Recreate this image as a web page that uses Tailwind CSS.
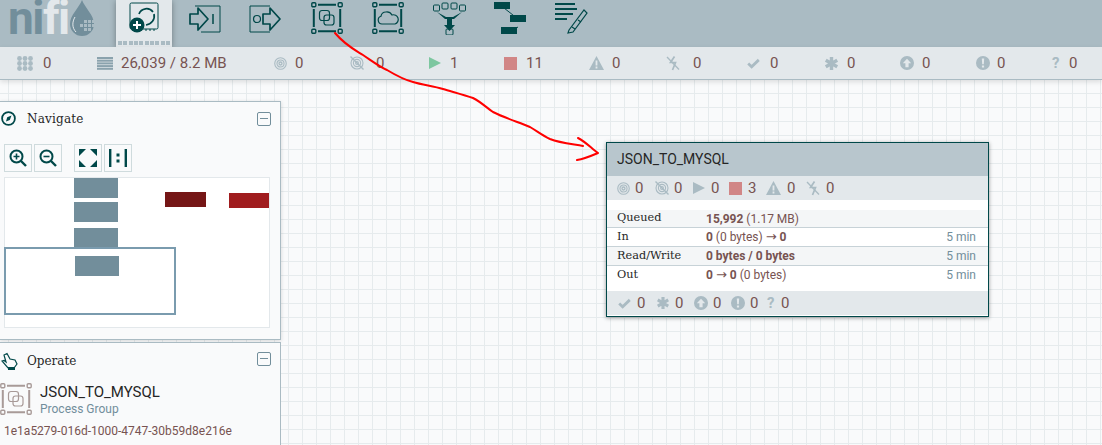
<!DOCTYPE html>
<html lang="en">
<head>
    <meta charset="UTF-8">
    <title>NiFi Flow</title>
    <script src="https://cdn.jsdelivr.net/npm/@tailwindcss/browser@4"></script>
</head>
<body class="overflow-hidden">
    <!-- shared status icons -->
    <svg class="hidden">
        <symbol id="i-target" viewBox="0 0 14 14"><g fill="none" stroke="currentColor"><circle cx="7" cy="7" r="6.2" stroke-width="1.2"/><circle cx="7" cy="7" r="3.8" stroke-width="1.2"/><circle cx="7" cy="7" r="1.6" stroke-width="1.4"/></g></symbol>
        <symbol id="i-notarget" viewBox="0 0 14 14"><g fill="none" stroke="currentColor"><circle cx="7" cy="7" r="6" stroke-width="1.1"/><circle cx="7" cy="7" r="3.6" stroke-width="1.1"/><circle cx="7" cy="7" r="1.4" stroke-width="1.1"/><path d="M0.5 0.5L13.5 13.5" stroke-width="1.4"/></g></symbol>
        <symbol id="i-play" viewBox="0 0 12 12"><path d="M0 0L12 6L0 12Z" fill="currentColor"/></symbol>
        <symbol id="i-warn" viewBox="0 0 15 14"><path fill-rule="evenodd" d="M7.5 0L15 14H0ZM6.6 4.5V9.5H8.4V4.5ZM6.6 10.6V12.4H8.4V10.6Z" fill="currentColor"/></symbol>
        <symbol id="i-bolt" viewBox="0 0 14 15"><g fill="none" stroke="currentColor"><path d="M8.5 0.5L4.5 6.5H9.5L6.5 14" stroke-width="1.7"/><path d="M1 1L13 13.5" stroke-width="1.3"/></g></symbol>
        <symbol id="i-check" viewBox="0 0 14 11"><path d="M1.3 5.5L5 9L12.7 1.6" fill="none" stroke="currentColor" stroke-width="3"/></symbol>
        <symbol id="i-star" viewBox="0 0 13 13"><path d="M6.5 0V13M0.8 3.2L12.2 9.8M12.2 3.2L0.8 9.8" fill="none" stroke="currentColor" stroke-width="3.4"/></symbol>
        <symbol id="i-up" viewBox="0 0 14 14"><path fill-rule="evenodd" d="M7 0a7 7 0 1 0 0 14A7 7 0 0 0 7 0ZM7 2.8L11.2 7.2H8.6V11.2H5.4V7.2H2.8Z" fill="currentColor"/></symbol>
        <symbol id="i-excl" viewBox="0 0 14 14"><path fill-rule="evenodd" d="M7 0a7 7 0 1 0 0 14A7 7 0 0 0 7 0ZM5.8 2.6H8.2L7.8 8.2H6.2ZM5.9 9.4H8.1V11.4H5.9Z" fill="currentColor"/></symbol>
        <symbol id="i-group" viewBox="0 0 32 32"><g fill="none" stroke="currentColor"><rect x="0.8" y="0.8" width="4" height="4" rx="1" stroke-width="1.4"/><rect x="27.2" y="0.8" width="4" height="4" rx="1" stroke-width="1.4"/><rect x="0.8" y="27.2" width="4" height="4" rx="1" stroke-width="1.4"/><rect x="27.2" y="27.2" width="4" height="4" rx="1" stroke-width="1.4"/><path d="M7 2.8H25M7 29.2H25M2.8 7V25M29.2 7V25" stroke-width="2"/><rect x="8.5" y="8.5" width="10" height="10" rx="2.5" stroke-width="1.2"/><rect x="13" y="13" width="10" height="10" rx="2.5" stroke-width="1.2"/></g></symbol>
    </svg>

    <div class="relative w-[1102px] h-[445px] overflow-hidden font-['Roboto',sans-serif] text-[#775351] bg-[#f9fafb]">
        <!-- Canvas grid -->
        <div class="absolute inset-0 bg-[linear-gradient(to_right,#e6ebed_1px,transparent_1px),linear-gradient(to_bottom,#e6ebed_1px,transparent_1px)] bg-[size:14px_14px] bg-[position:8px_9px]"></div>

        <!-- Toolbar -->
        <header class="relative flex items-start h-[47px] bg-[#aabbc3] text-[#004849]">
            <div class="flex w-[116px] h-[47px] pl-[8px]">
                <div class="leading-[37px] text-[46px] font-bold tracking-[-1.5px] whitespace-nowrap"><span class="text-[#728e9b]">ni</span><span class="text-[#e3e8eb]">fi</span></div>
                <svg class="shrink-0" width="27" height="36" viewBox="0 0 27 36"><path d="M13 0C10 8 1 15 1 24a12 12 0 0 0 24 0C25 15 16 8 13 0Z" fill="#728e9b"/><path d="M6 17C3 22 3 28 7 32" fill="none" stroke="#e3e8eb" stroke-width="1"/><g fill="#aabbc3"><rect x="15" y="20" width="3" height="3"/><rect x="19" y="20" width="3" height="3"/><rect x="23" y="20" width="3" height="3"/><rect x="11" y="24" width="3" height="3"/><rect x="15" y="24" width="3" height="3"/><rect x="19" y="24" width="3" height="3"/><rect x="23" y="24" width="3" height="3"/><rect x="15" y="28" width="3" height="3"/><rect x="19" y="28" width="3" height="3"/></g></svg>
            </div>
            <!-- Selected processor button -->
            <div class="flex flex-col items-center w-[56px] h-[47px] bg-[#e3e8eb] shadow-[0_1px_6px_rgba(0,0,0,0.35)]">
                <svg class="mt-[2px]" width="32" height="31" viewBox="0 0 32 31"><g fill="none" stroke="currentColor"><rect x="2" y="1" width="28" height="26" rx="1.5" stroke-width="1"/><path d="M11 12A8 8 0 0 1 25 10" stroke-width="1.7"/><path d="M26 12A9 9 0 0 1 18 23" stroke-width="1.7"/><path d="M18 27V29M22 27V29M26 27V29" stroke-width="1"/></g><circle cx="9" cy="23" r="7.5" fill="currentColor"/><path d="M9 19V27M5 23H13" stroke="#fff" stroke-width="2"/></svg>
                <div class="flex gap-[1.4px] mt-[8px]">
                    <span class="w-[4px] h-[4px] bg-[#aabbc3]"></span><span class="w-[4px] h-[4px] bg-[#aabbc3]"></span><span class="w-[4px] h-[4px] bg-[#aabbc3]"></span><span class="w-[4px] h-[4px] bg-[#aabbc3]"></span><span class="w-[4px] h-[4px] bg-[#aabbc3]"></span><span class="w-[4px] h-[4px] bg-[#aabbc3]"></span><span class="w-[4px] h-[4px] bg-[#aabbc3]"></span><span class="w-[4px] h-[4px] bg-[#aabbc3]"></span><span class="w-[4px] h-[4px] bg-[#aabbc3]"></span><span class="w-[4px] h-[4px] bg-[#aabbc3]"></span>
                </div>
            </div>
            <!-- Input port -->
            <svg class="ml-[17px] mt-[5px]" width="33" height="28" viewBox="0 0 33 28"><g fill="none" stroke="currentColor"><path d="M6 1H31V27H12" stroke-width="1"/><path d="M1 9H9V3L19 14L9 25V19H1Z" stroke-width="1.7" stroke-linejoin="round"/><path d="M24 9V19" stroke-width="1.5"/></g></svg>
            <!-- Output port -->
            <svg class="ml-[27px] mt-[5px]" width="33" height="28" viewBox="0 0 33 28"><g fill="none" stroke="currentColor"><path d="M21 1H1V27H21" stroke-width="1"/><circle cx="8" cy="14" r="3.5" stroke-width="1.2"/><path d="M14 9H21V3L31 14L21 25V19H14Z" stroke-width="1.7" stroke-linejoin="round"/></g></svg>
            <!-- Process group -->
            <svg class="ml-[29px] mt-[2px]" width="32" height="32" viewBox="0 0 32 32"><use href="#i-group"/></svg>
            <!-- Remote process group -->
            <svg class="ml-[29px] mt-[2px]" width="32" height="32" viewBox="0 0 32 32"><g fill="none" stroke="currentColor"><rect x="0.8" y="0.8" width="4" height="4" rx="1" stroke-width="1.4"/><rect x="27.2" y="0.8" width="4" height="4" rx="1" stroke-width="1.4"/><rect x="0.8" y="27.2" width="4" height="4" rx="1" stroke-width="1.4"/><rect x="27.2" y="27.2" width="4" height="4" rx="1" stroke-width="1.4"/><path d="M7 2.8H25M7 29.2H25M2.8 7V25M29.2 7V25" stroke-width="2"/><path d="M10 22A4 4 0 0 1 9 14.2A5 5 0 0 1 14 10A6 6 0 0 1 20 13A4.5 4.5 0 0 1 23 22Z" stroke-width="1.2"/></g></svg>
            <!-- Funnel -->
            <svg class="ml-[29px] mt-[2px]" width="33" height="33" viewBox="0 0 33 33"><g fill="none" stroke="currentColor" stroke-width="1"><rect x="0.5" y="3" width="6" height="6" rx="1"/><rect x="9" y="1" width="6" height="6" rx="1"/><rect x="18" y="1" width="6" height="6" rx="1"/><rect x="26.5" y="3" width="6" height="6" rx="1"/><rect x="13" y="27" width="7" height="6" rx="1"/></g><path d="M4 10L13 15H20L29 10L21 17H12Z" fill="currentColor"/><path d="M14 17H19V23H22L16.5 29L11 23H14Z" fill="currentColor"/></svg>
            <!-- Template -->
            <svg class="ml-[28px] mt-[2px]" width="32" height="32" viewBox="0 0 32 32"><path d="M10 6L24 17M24 25L16 30" stroke="currentColor" fill="none"/><rect width="16" height="7" fill="currentColor"/><rect x="16" y="13" width="16" height="7" fill="currentColor"/><rect x="7" y="25" width="16" height="7" fill="currentColor"/></svg>
            <!-- Label -->
            <svg class="ml-[29px] mt-[2px]" width="33" height="32" viewBox="0 0 33 32"><path d="M0 2H20M0 7H22M0 12H18M0 17H12" stroke="currentColor" stroke-width="2" fill="none"/><g fill="none" stroke="currentColor" stroke-width="1.2"><path d="M14 28L29 8L32 11L18 30L13 31Z"/><path d="M17 25L20 27M23 18L26 20"/></g></svg>
        </header>

        <!-- Status bar -->
        <div class="relative flex items-center h-[33px] pl-[17px] bg-[#e3e8eb] border-b border-[#aabbc3] shadow-[0_2px_5px_rgba(0,0,0,0.12)] text-[15px] leading-[20px]">
            <div class="flex items-center w-[80px]">
                <svg class="text-[#aabbc3]" width="16" height="15" viewBox="0 0 16 15" fill="currentColor"><circle cx="2.5" cy="2.5" r="2.4"/><circle cx="8" cy="2.5" r="2.4"/><circle cx="13.5" cy="2.5" r="2.4"/><circle cx="2.5" cy="7.5" r="2.4"/><circle cx="8" cy="7.5" r="2.4"/><circle cx="13.5" cy="7.5" r="2.4"/><circle cx="2.5" cy="12.5" r="2.4"/><circle cx="8" cy="12.5" r="2.4"/><circle cx="13.5" cy="12.5" r="2.4"/></svg>
                <span class="ml-[10px]">0</span>
            </div>
            <div class="flex items-center w-[177px]">
                <svg class="text-[#8aa2ad]" width="16" height="13" viewBox="0 0 16 13" fill="currentColor"><rect width="16" height="2"/><rect y="2.7" width="16" height="2"/><rect y="5.4" width="16" height="2"/><rect y="8.1" width="16" height="2"/><rect y="10.8" width="16" height="2"/></svg>
                <span class="ml-[8px]">26,039 / 8.2 MB</span>
            </div>
            <div class="flex items-center w-[76px] text-[#aabbc3]"><svg width="13" height="13"><use href="#i-target"/></svg><span class="ml-[8px] text-[#775351]">0</span></div>
            <div class="flex items-center w-[79px] text-[#aabbc3]"><svg width="14" height="14"><use href="#i-notarget"/></svg><span class="ml-[12px] text-[#775351]">0</span></div>
            <div class="flex items-center w-[75px] text-[#7dc7a0]"><svg width="12" height="12"><use href="#i-play"/></svg><span class="ml-[9px] text-[#775351]">1</span></div>
            <div class="flex items-center w-[85px]"><span class="w-[13px] h-[13px] bg-[#d18686]"></span><span class="ml-[9px]">11</span></div>
            <div class="flex items-center w-[77px] text-[#aabbc3]"><svg width="15" height="14"><use href="#i-warn"/></svg><span class="ml-[8px] text-[#775351]">0</span></div>
            <div class="flex items-center w-[81px] text-[#aabbc3]"><svg width="14" height="15"><use href="#i-bolt"/></svg><span class="ml-[13px] text-[#775351]">0</span></div>
            <div class="flex items-center w-[78px] text-[#aabbc3]"><svg width="13" height="11"><use href="#i-check"/></svg><span class="ml-[10px] text-[#775351]">0</span></div>
            <div class="flex items-center w-[75px] text-[#aabbc3]"><svg width="13" height="13"><use href="#i-star"/></svg><span class="ml-[9px] text-[#775351]">0</span></div>
            <div class="flex items-center w-[76px] text-[#aabbc3]"><svg width="14" height="14"><use href="#i-up"/></svg><span class="ml-[8px] text-[#775351]">0</span></div>
            <div class="flex items-center w-[76px] text-[#aabbc3]"><svg width="14" height="14"><use href="#i-excl"/></svg><span class="ml-[7px] text-[#775351]">0</span></div>
            <div class="flex items-center"><span class="w-[11px] font-bold text-[#aabbc3]">?</span><span class="ml-[6px]">0</span></div>
        </div>

        <!-- Navigate panel -->
        <section class="absolute left-0 top-[101px] w-[281px] h-[239px] bg-[#f9fafb] border-t border-r border-b border-[#aabbc3] shadow-[0_1px_4px_rgba(0,0,0,0.15)]">
            <div class="flex items-center h-[33px] pl-[1px] pr-[9px]">
                <svg class="text-[#004849]" width="15" height="15" viewBox="0 0 15 15"><circle cx="7.5" cy="7.5" r="6.4" fill="none" stroke="currentColor" stroke-width="1.8"/><path d="M10.5 4.5L8.8 9L5 10.5L6.2 6.2Z" fill="currentColor"/></svg>
                <span class="ml-[11px] font-['DejaVu_Serif',serif] text-[12px] tracking-[0.2px] text-[#262626]">Navigate</span>
                <span class="relative ml-auto w-[14px] h-[14px] border border-[#728e9b] rounded-[2px]"><span class="absolute left-[2px] right-[2px] top-[5px] h-[1px] bg-[#728e9b]"></span></span>
            </div>
            <div class="flex pl-[4px] mt-[9px] text-[#004849]">
                <button class="flex items-center justify-center w-[28px] h-[28px] border border-[#cfdbdd]"><svg width="18" height="18" viewBox="0 0 18 18" fill="none" stroke="currentColor"><circle cx="7.5" cy="7.5" r="6" stroke-width="2"/><path d="M12 12L17 17" stroke-width="2.4"/><path d="M7.5 4.5V10.5M4.5 7.5H10.5" stroke-width="1.6"/></svg></button>
                <button class="flex items-center justify-center w-[28px] h-[28px] ml-[2px] border border-[#cfdbdd]"><svg width="18" height="18" viewBox="0 0 18 18" fill="none" stroke="currentColor"><circle cx="7.5" cy="7.5" r="6" stroke-width="2"/><path d="M12 12L17 17" stroke-width="2.4"/><path d="M4.5 7.5H10.5" stroke-width="1.6"/></svg></button>
                <button class="flex items-center justify-center w-[28px] h-[28px] ml-[12px] border border-[#cfdbdd]"><svg width="18" height="18" viewBox="0 0 18 18" fill="currentColor"><path d="M0 0H7L0 7ZM18 0V7L11 0ZM0 18V11L7 18ZM18 18H11L18 11Z"/></svg></button>
                <button class="flex items-center justify-center w-[28px] h-[28px] ml-[2px] border border-[#cfdbdd]"><svg width="18" height="18" viewBox="0 0 18 18" fill="currentColor"><rect x="0" width="2.4" height="18"/><rect x="15.6" width="2.4" height="18"/><rect x="7.5" y="4.5" width="3" height="3"/><rect x="7.5" y="10.5" width="3" height="3"/></svg></button>
            </div>
            <!-- Birdseye -->
            <div class="relative w-[266px] h-[151px] ml-[4px] mt-[5px] bg-white border border-[#e3e8eb]">
                <div class="absolute left-[69px] top-0 w-[44px] h-[20px] bg-[#728e9b]"></div>
                <div class="absolute left-[69px] top-[24px] w-[44px] h-[20px] bg-[#728e9b]"></div>
                <div class="absolute left-[69px] top-[50px] w-[44px] h-[20px] bg-[#728e9b]"></div>
                <div class="absolute left-[70px] top-[78px] w-[44px] h-[20px] bg-[#728e9b]"></div>
                <div class="absolute left-[160px] top-[14px] w-[41px] h-[15px] bg-[#751616]"></div>
                <div class="absolute left-[224px] top-[15px] w-[40px] h-[15px] bg-[#a01c1e]"></div>
                <div class="absolute -left-[1px] top-[69px] w-[172px] h-[68px] border-2 border-[#7a9bae]"></div>
            </div>
        </section>

        <!-- Operate panel -->
        <section class="absolute left-0 top-[342px] w-[281px] h-[103px] bg-[#f9fafb] border-t border-r border-[#aabbc3]">
            <div class="flex items-center h-[34px] pt-[1px] pl-[1px] pr-[9px]">
                <svg class="text-[#004849]" width="17" height="18" viewBox="0 0 17 18"><path d="M6 1.5L9 7L14 8L16 12L13 16H7L1 9L3 8.5L5 10L3 3Z" fill="none" stroke="currentColor" stroke-width="1.2"/><path d="M7 15H14V18H7Z" fill="currentColor"/></svg>
                <span class="ml-[9px] font-['DejaVu_Serif',serif] text-[12px] text-[#262626]">Operate</span>
                <span class="relative ml-auto -mt-[3px] w-[14px] h-[14px] border border-[#728e9b] rounded-[2px]"><span class="absolute left-[2px] right-[2px] top-[5px] h-[1px] bg-[#728e9b]"></span></span>
            </div>
            <div class="flex mt-[6px]">
                <svg class="text-[#a89a98]" width="32" height="32"><use href="#i-group"/></svg>
                <div class="ml-[8px] -mt-[1px]">
                    <div class="text-[15px] leading-[20px] text-[#262626]">JSON_TO_MYSQL</div>
                    <div class="text-[12px] leading-[14px] text-[#728e9b]">Process Group</div>
                </div>
            </div>
            <div class="ml-[4px] mt-[7px] text-[12px] leading-[16px]">1e1a5279-016d-1000-4747-30b59d8e216e</div>
        </section>

        <!-- Process group node -->
        <article class="absolute left-[606px] top-[142px] w-[383px] h-[175px] bg-white border border-[#004849] shadow-[0_1px_4px_rgba(0,0,0,0.4)]">
            <div class="flex items-center h-[33px] pl-[10px] bg-[#b8c6cd] text-[14px] text-[#262626]">JSON_TO_MYSQL</div>
            <div class="flex items-center h-[24px] pl-[10px] bg-[#e3e8eb] text-[15px] text-[#aabbc3]">
                <svg width="13" height="13"><use href="#i-target"/></svg><span class="ml-[5px] w-[17px] text-[#775351]">0</span>
                <svg class="ml-[3px]" width="14" height="14"><use href="#i-notarget"/></svg><span class="ml-[5px] w-[17px] text-[#775351]">0</span>
                <svg class="ml-[2px]" width="12" height="12"><use href="#i-play"/></svg><span class="ml-[6px] w-[17px] text-[#775351]">0</span>
                <span class="ml-[1px] w-[13px] h-[13px] bg-[#d18686]"></span><span class="ml-[6px] w-[17px] text-[#775351]">3</span>
                <svg class="ml-[1px]" width="15" height="14"><use href="#i-warn"/></svg><span class="ml-[6px] w-[17px] text-[#775351]">0</span>
                <svg class="ml-[2px]" width="14" height="15"><use href="#i-bolt"/></svg><span class="ml-[6px] text-[#775351]">0</span>
            </div>
            <div class="h-[10px]"></div>
            <div class="flex items-center h-[18px] pl-[10px] pr-[12px] bg-[#f4f6f7] border-b border-[#c7d2d7] text-[12px]">
                <span class="w-[89px] font-['DejaVu_Serif',serif] text-[11.3px] text-[#262626]">Queued</span><span><b class="font-bold">15,992</b> (1.17 MB)</span>
            </div>
            <div class="flex items-center h-[19px] pl-[10px] pr-[12px] border-b border-[#c7d2d7] text-[12px]">
                <span class="w-[89px] font-['DejaVu_Serif',serif] text-[11.3px] text-[#262626]">In</span><span><b class="font-bold">0</b> (0 bytes) <span class="font-['DejaVu_Sans',sans-serif] text-[13px]">→</span> <b class="font-bold">0</b></span><span class="ml-auto text-[#728e9b]">5 min</span>
            </div>
            <div class="flex items-center h-[19px] pl-[10px] pr-[12px] bg-[#f4f6f7] border-b border-[#c7d2d7] text-[12px]">
                <span class="w-[89px] font-['DejaVu_Serif',serif] text-[11.3px] text-[#262626]">Read/Write</span><b class="font-bold">0 bytes / 0 bytes</b><span class="ml-auto font-normal text-[#728e9b]">5 min</span>
            </div>
            <div class="flex items-center h-[18px] pl-[10px] pr-[12px] text-[12px]">
                <span class="w-[89px] font-['DejaVu_Serif',serif] text-[11.3px] text-[#262626]">Out</span><span><b class="font-bold">0</b> <span class="font-['DejaVu_Sans',sans-serif] text-[13px]">→</span> <b class="font-bold">0</b> (0 bytes)</span><span class="ml-auto text-[#728e9b]">5 min</span>
            </div>
            <div class="h-[7px]"></div>
            <div class="flex items-center h-[24px] pl-[11px] bg-[#e3e8eb] text-[15px] text-[#aabbc3]">
                <svg width="13" height="11"><use href="#i-check"/></svg><span class="ml-[6px] w-[15px] text-[#775351]">0</span>
                <svg class="ml-[5px]" width="12" height="12"><use href="#i-star"/></svg><span class="ml-[6px] w-[15px] text-[#775351]">0</span>
                <svg class="ml-[4px]" width="14" height="14"><use href="#i-up"/></svg><span class="ml-[5px] w-[15px] text-[#775351]">0</span>
                <svg class="ml-[3px]" width="14" height="14"><use href="#i-excl"/></svg><span class="ml-[5px] w-[15px] text-[#775351]">0</span>
                <span class="ml-[2px] w-[11px] font-bold">?</span><span class="ml-[3px] text-[#775351]">0</span>
            </div>
        </article>

        <!-- Red annotation arrow -->
        <svg class="absolute inset-0 pointer-events-none" width="1102" height="445" viewBox="0 0 1102 445"><path d="M335 33C345 45 355 50 363 55C372 61 380 67 387 70C397 76 405 80 413 82C423 85 433 86 443 89C453 92 464 95 473 98C481 102 487 108 493 112C505 118 518 122 530 127C537 131 543 136 550 139C560 143 572 144 583 146M578 138C586 142 592 149 598 153C591 156 584 159 577 160" fill="none" stroke="#ff0000" stroke-width="2" stroke-linecap="round" stroke-linejoin="round"/></svg>
    </div>
</body>
</html>
